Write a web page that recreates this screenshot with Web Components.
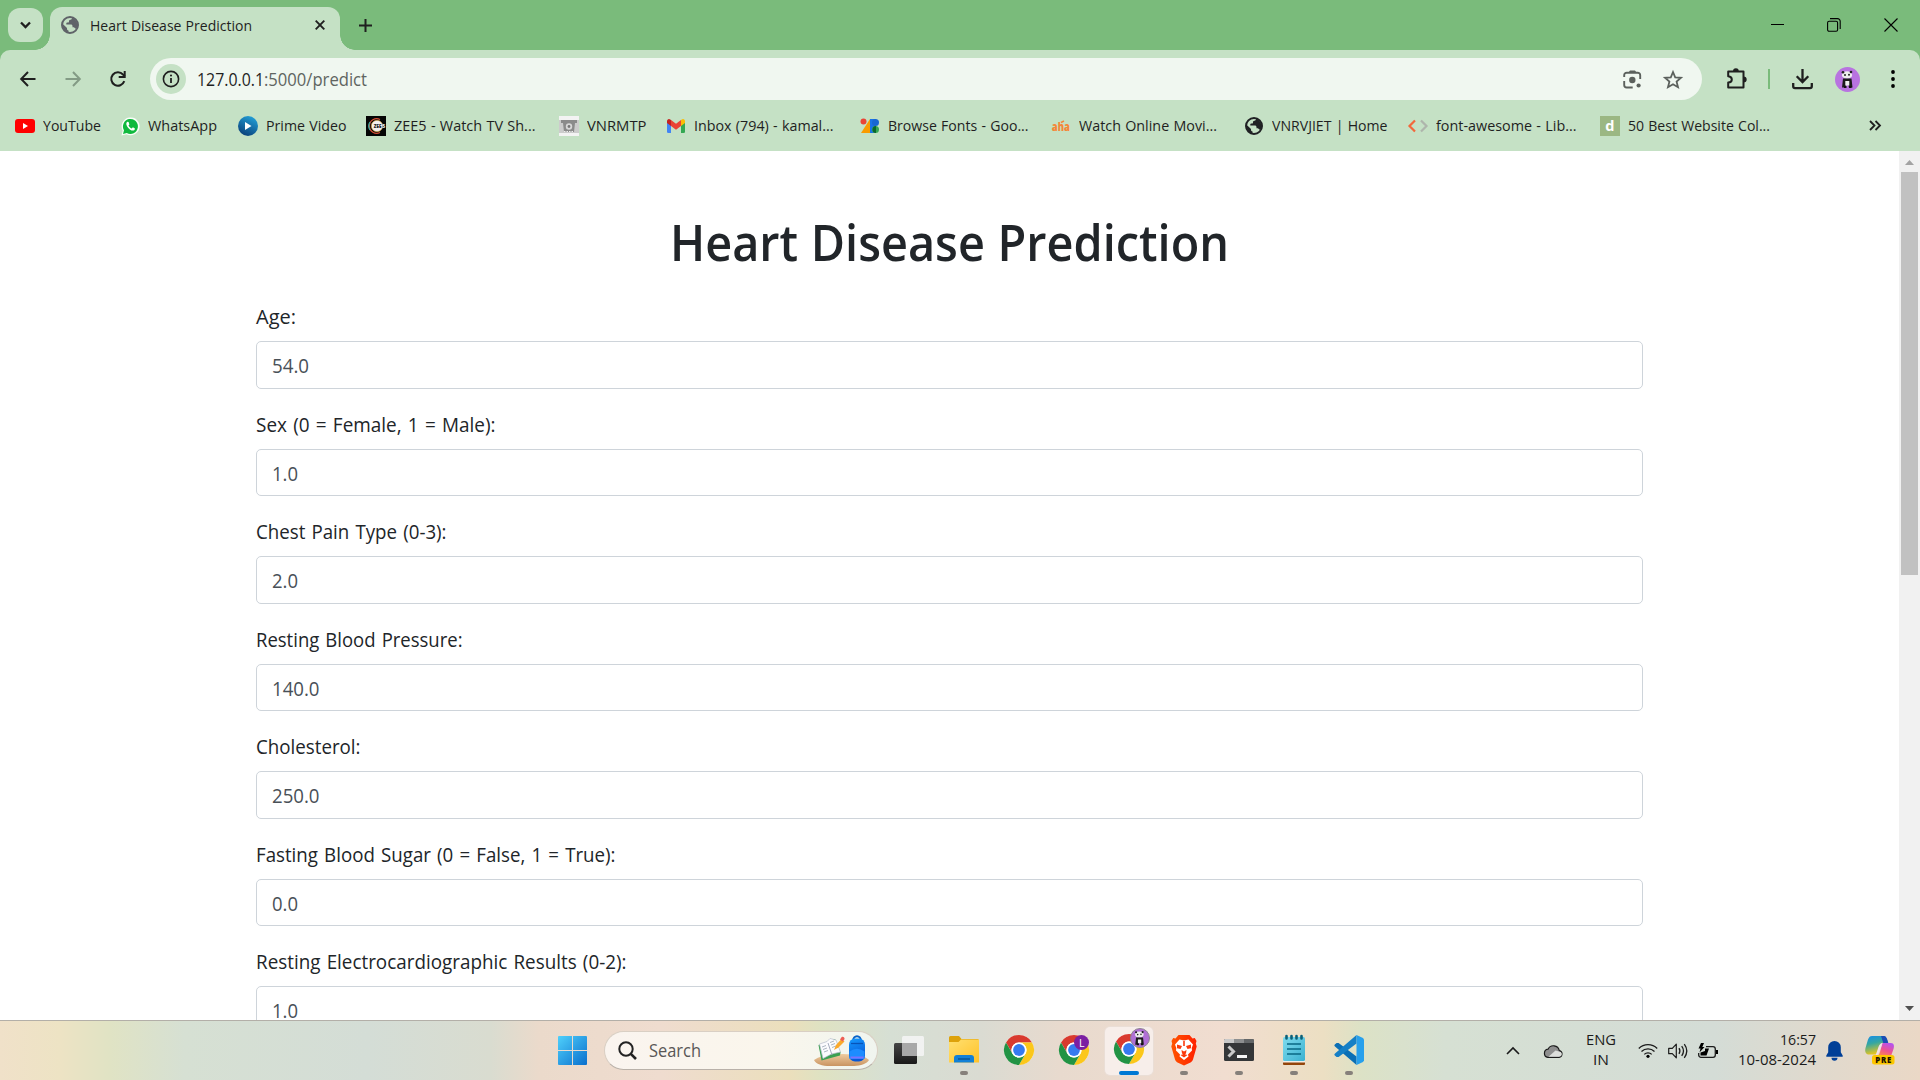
<!DOCTYPE html>
<html lang="en">
<head>
<meta charset="utf-8">
<title>Heart Disease Prediction</title>
<style>
html,body{margin:0;height:100%;overflow:hidden;background:#fff}
body{font-family:"Open Sans","Noto Sans",sans-serif;color:#1f1f1f}
</style>
</head>
<body>
<desktop-screen></desktop-screen>
<script>
const chrome = `<circle cx="15" cy="15" r="15" fill="#fff"/>
<path d="M2 7.5A15 15 0 0 1 28 7.5H15A7.5 7.5 0 0 0 8.5 18.7Z" fill="#d93a2f"/>
<path d="M28 7.5A15 15 0 0 1 15 30L21.5 18.7A7.5 7.5 0 0 0 15 7.5Z" fill="#fbc71b"/>
<path d="M15 30A15 15 0 0 1 2 7.5L8.5 18.7A7.5 7.5 0 0 0 21.5 18.7Z" fill="#229344"/>
<circle cx="15" cy="15" r="7.6" fill="#fff"/><circle cx="15" cy="15" r="5.9" fill="#367af0"/>`;
const globe = c => `<circle cx="9" cy="9" r="8" fill="none" stroke="${c}" stroke-width="2"/>
<path d="M11.2 1.6C11 3 10.7 3.6 9.4 3.8 8.3 4 8 4.6 8 5.4c0 .9-.6 1.200-1.400 1.200-.8 0-1.300.3-1.300 1.100v.8h4.300c1.300 0 1.900.6 1.900 1.700v1.100h.7c1.100 0 1.700.5 2 1.500L15.900 12A8 8 0 0 0 11.200 1.600ZM1.300 7.600 6 12.100v.7c0 1 .6 1.500 1.500 1.700v2.200A8 8 0 0 1 1.300 7.600Z" fill="${c}"/>`;
const panda = `<ellipse cx="12" cy="8" rx="5.200" ry="3.700" fill="#eee"/><circle cx="8" cy="5.200" r="1.300" fill="#222"/><circle cx="16" cy="5" r="1.300" fill="#222"/><circle cx="10" cy="8" r="1" fill="#222"/><circle cx="14" cy="7.700" r="1" fill="#222"/><path d="M8 11.500h8.500l1 9h-3.700l-.5-4.500h-2l-.6 4.500H7Z" fill="#1b1b1b"/><path d="M10.300 14h4v4.500h-4z" fill="#eee"/><path d="M9 20h2.500M14 20h2.500" stroke="#111" stroke-width="2"/>`;
const ICONS = {
 chevron:[35,34,`<path d="m13 14.500 4.500 4.500 4.500-4.500" fill="none" stroke="#1f1f1f" stroke-width="2.300"/>`],
 globeGrey:[18,18,globe('#5f6368')],
 globeDark:[18,18,globe('#202124')],
 close:[10,10,`<path d="m.7.7 8.600 8.600M9.300.7.7 9.300" stroke="#1f1f1f" stroke-width="1.900"/>`],
 plus:[13,13,`<path d="M6.500 0v13M0 6.500h13" stroke="#1f1f1f" stroke-width="2"/>`],
 min:[13,13,`<path d="M0 6.500h13" stroke="#000"/>`],
 restore:[14,14,`<rect x=".6" y="3.200" width="10" height="10" rx="1.500" fill="none" stroke="#000" stroke-width="1.100"/><path d="M3 .6h7.500a2.700 2.700 0 0 1 2.700 2.700V11" fill="none" stroke="#000" stroke-width="1.100"/>`],
 winclose:[14,14,`<path d="m.5.5 13 13M13.500.5l-13 13" stroke="#000" stroke-width="1.100"/>`],
 back:[16,16,`<path d="M15.500 8H1.500M8 1 1.200 8 8 15" fill="none" stroke="#1f1f1f" stroke-width="2"/>`],
 fwd:[16,16,`<path d="M.5 8h14M8 1l6.800 7L8 15" fill="none" stroke="#839b85" stroke-width="2"/>`],
 reload:[16,16,`<path d="M14.300 10.200A6.700 6.700 0 1 1 13 3.500L14.800 5.300" fill="none" stroke="#1f1f1f" stroke-width="2"/><path d="M15.700 0v7H8.700V5h5V0Z" fill="#1f1f1f"/>`],
 info:[30,30,`<circle cx="15" cy="15" r="15" fill="#c5e1c5"/><circle cx="15" cy="15" r="7.600" fill="none" stroke="#1f1f1f" stroke-width="1.600"/><path d="M15 14v5" stroke="#1f1f1f" stroke-width="1.800"/><circle cx="15" cy="11.500" r="1.050" fill="#1f1f1f"/>`],
 lens:[19,19,`<path d="M1.200 7V5.200A2.500 2.500 0 0 1 3.700 2.700h11A2.500 2.500 0 0 1 17.200 5.200V9M1.200 11v4A2.500 2.500 0 0 0 3.700 17.500h6" fill="none" stroke="#5b605c" stroke-width="1.900"/><path d="M5.500 2.500 7 .5h5l1.500 2Z" fill="#5b605c"/><circle cx="9.300" cy="10" r="3.200" fill="#5b605c"/><circle cx="15.600" cy="15.500" r="2.100" fill="#5b605c"/>`],
 star:[20,19,`<path d="M10 2 12.200 7.300 18 7.800 13.600 11.600 15 17.200 10 14.200 5 17.200 6.400 11.600 2 7.800 7.800 7.300Z" fill="none" stroke="#5b605c" stroke-width="1.800"/>`],
 puzzle:[21,21,`<path d="M2.200 3.500H17.500V19.400H2.200V14.600C7 14.200 7 8.700 2.200 8.300Z" fill="none" stroke="#1f1f1f" stroke-width="2" stroke-linejoin="round"/><path d="M7 3.500a2.900 3.300 0 0 1 5.800 0ZM17.500 8.500a3.200 2.900 0 0 1 0 5.800Z" fill="#1f1f1f"/>`],
 download:[21,21,`<path d="M10.500 0v12M4.700 7.200l5.800 5.800 5.800-5.800M1.200 14v3.300a1.800 1.800 0 0 0 1.800 1.800H18a1.800 1.800 0 0 0 1.800-1.800V14" fill="none" stroke="#1f1f1f" stroke-width="2.300"/>`],
 avatar:[25,25,`<circle cx="12.500" cy="12.500" r="12.500" fill="#b873e0"/>${panda}`],
 dots:[4,18,`<circle cx="2" cy="2" r="1.900"/><circle cx="2" cy="9" r="1.900"/><circle cx="2" cy="16" r="1.900"/>`],
 more:[12,11,`<path d="m1 1 4.500 4.500L1 10M6.500 1 11 5.500 6.500 10" fill="none" stroke="#1f1f1f" stroke-width="1.800"/>`],
 youtube:[20,20,`<rect y="3" width="20" height="14" rx="3" fill="#f00"/><path d="m8 7 5 3-5 3Z" fill="#fff"/>`],
 whatsapp:[20,20,`<path d="M1.500 19.500 2.700 14.600A9 8.900 0 1 1 6.400 18.200Z" fill="#f8fff8"/><path d="m3 18 1-3.700a7.500 7.500 0 1 1 2.800 2.700Z" fill="#10b93e"/><path d="M7.300 5.700c-1.500 1-1.300 3 .2 5.200 1.900 2.700 4.300 4.100 6 3.600 1-.3 1.400-1 1.400-2l-2-1.200-1.200 1.200c-1.500-.6-2.500-1.600-3.200-3l.9-1.100-.8-2.400Z" fill="#fff"/>`],
 prime:[20,20,`<defs><linearGradient id="p" x1=".8" y1="0" x2=".3" y2="1"><stop stop-color="#23a3da"/><stop offset="1" stop-color="#0a3f79"/></linearGradient></defs><circle cx="10" cy="10" r="10" fill="url(#p)"/><path d="m7 6 6.500 4L7 14Z" fill="#fff"/>`],
 zee:[20,20,`<rect width="20" height="20" fill="#050505"/><path d="M14 3.500a7.300 7.300 0 1 0 0 13" fill="none" stroke="#d44e35" stroke-width="1.300"/><path d="M4 6a7.300 7.300 0 0 0 0 8" fill="none" stroke="#3aa7a0" stroke-width="1.300"/><circle cx="11" cy="10" r="5.700" fill="#f5f0f0" stroke="#dca538" stroke-width=".6"/><text x="7.800" y="11.600" font-size="4.500" font-weight="800" font-family="Open Sans" fill="#222">ZEE</text><text x="16.600" y="11.600" font-size="4.500" font-weight="800" font-family="Open Sans" fill="#eee">5</text>`],
 vnr:[20,20,`<rect width="20" height="20" fill="#f3f3f3"/><rect y="4" width="20" height="13" fill="#ccc"/><path d="M2 4h16v3H2ZM4 7h12l-1 9H5Z" fill="#8b8b8b"/><circle cx="10" cy="10.500" r="3.200" fill="#d8d8d8"/><circle cx="10" cy="10.500" r="1.400" fill="#777"/><path d="M5 15.500h10" stroke="#eee" stroke-dasharray="1.500 1"/>`],
 gmail:[18,14,`<path d="M0 3v9.700A1.300 1.300 0 0 0 1.300 14H4V6Z" fill="#4285f4"/><path d="M18 3v9.700a1.300 1.300 0 0 1-1.300 1.300H14V6Z" fill="#34a853"/><path d="M4 7 0 4V2A2 2 0 0 1 3.200.5L4 1Z" fill="#c5221f"/><path d="M14 7l4-3V2A2 2 0 0 0 14.800.5L14 1Z" fill="#fbbc04"/><path d="m4 1 5 3.800L14 1v6l-5 3.800L4 7Z" fill="#ea4335"/>`],
 fonts:[20,16,`<path d="M10 1v14H1Z" fill="#f99b00"/><circle cx="3.500" cy="3.500" r="3" fill="#ea4335"/><path d="M10 1h6v14h-6Z" fill="#1a73e8"/><circle cx="15.500" cy="4.500" r="3.500" fill="#1967d2"/><circle cx="15.500" cy="11.500" r="3.500" fill="#34a853"/><path d="M16 8v7a3.500 3.500 0 0 1 0-7Z" fill="#0d652d"/>`],
 aha:[20,20,`<text x=".8" y="14.500" font-family="Open Sans" font-weight="800" font-size="12.500" textLength="18" lengthAdjust="spacingAndGlyphs" fill="#f58738">aha</text><path d="M10 6.500 13 5" stroke="#f58738" stroke-width="1.500"/>`],
 code:[20,14,`<path d="M7 1.500 1.500 7 7 12.500" fill="none" stroke="#f2683c" stroke-width="2.200"/><path d="M13 1.500 18.500 7 13 12.500" fill="none" stroke="#aeb5ac" stroke-width="2.200"/>`],
 dd:[20,20,`<rect width="20" height="20" fill="#9bb783"/><text x="5.200" y="15.300" font-family="Open Sans" font-weight="700" font-size="14.500" fill="#fff">d</text>`],
 win:[29,29,`<defs><linearGradient id="w" x1="0" y1="0" x2="1" y2="1"><stop stop-color="#4fd0fb"/><stop offset="1" stop-color="#0a6fcd"/></linearGradient></defs><path d="M1 0h13v14H0V1A1 1 0 0 1 1 0ZM15 0h13a1 1 0 0 1 1 1v13H15ZM0 15h14v14H1a1 1 0 0 1-1-1ZM15 15h14v13a1 1 0 0 1-1 1H15Z" fill="url(#w)"/>`],
 search:[19,19,`<circle cx="8" cy="8" r="6.700" fill="none" stroke="#222" stroke-width="2"/><path d="m12.800 12.800 5.200 5.200" stroke="#222" stroke-width="2.600"/>`],
 school:[57,32,`<defs><linearGradient id="tb" x2="0" y2="1"><stop stop-color="#efcca0"/><stop offset="1" stop-color="#c99462"/></linearGradient><linearGradient id="bg" x2=".3" y2="1"><stop stop-color="#169bff"/><stop offset="1" stop-color="#0757d6"/></linearGradient></defs><path d="M1 25C5 22 14 19 30 19s23 3 26 6c-1 3-9 6-15 6H17C9 31 3 29 1 25Z" fill="url(#tb)"/><path d="m5.500 10 3 15.500L27 20.500l.5-3L22 4Z" fill="#3ba052"/><path d="m6.500 9 7.500-2.500 3-3 6 1.500 4.500 12-9 2-8.500 4.500Z" fill="#fbfbfd" stroke="#b9bdcd" stroke-width=".7"/><path d="m15 8 4 12" stroke="#a6adbf"/><path d="m9 12 4-1.500m-3 4 4-1.500m-3 4 4-1.500m2-8 4-1.500m-3 4 4-1.500m-3 4 4-1.500" stroke="#8a96a8" stroke-width=".7"/><path d="m21 15 2-5 5.500-6 3 2.500-6 6Z" fill="#fba92c"/><path d="m27 4.500 1.500-2.300c1.500-1.500 4 .8 2.700 2.500L29.700 6.500Z" fill="#ee5e55"/><path d="M40 6c0-6.500 8-6.500 8 0" fill="none" stroke="#0862c9" stroke-width="2"/><rect x="36" y="3.500" width="16" height="23" rx="6" fill="url(#bg)"/><path d="M36.500 16.500Q44 11 51.500 16.500V24H36.500Z" fill="#1d8cff"/><path d="M37.500 22.500h13" stroke="#7a72ff" stroke-width="2"/><path d="M38 8.500h12" stroke="#0754b8" stroke-width="1.300"/>`],
 tasks:[30,28,`<defs><linearGradient id="t" x2="0" y2="1"><stop stop-color="#454545"/><stop offset="1" stop-color="#191919"/></linearGradient></defs><rect y="7" width="23" height="21" rx="1.500" fill="url(#t)"/><rect x="8" y="0" width="22" height="20" rx="1.500" fill="#f5f5f5" opacity=".88"/><path d="M8 7h15v13H8Z" fill="#a8a8a8"/>`],
 folder:[30,27,`<defs><linearGradient id="f" x2="1" y2="1"><stop stop-color="#ffe071"/><stop offset="1" stop-color="#ffc229"/></linearGradient></defs><path d="M0 1.500A1.500 1.500 0 0 1 1.500 0H10l2.500 3H28.500A1.500 1.500 0 0 1 30 4.500V10H0Z" fill="#dda20b"/><path d="M0 6h9.500L12 3.500H30V26.500H0Z" fill="url(#f)"/><path d="M5 26.500V22a3 3 0 0 1 3-3h14a3 3 0 0 1 3 3v4.500Z" fill="#1280d7"/><path d="M9 23h12" stroke="#075699" stroke-width="1.500"/>`],
 chrome:[30,30,chrome],
 chromeL:[30,30,chrome+`<circle cx="22.500" cy="7.500" r="7.500" fill="#7b1fa2"/><text x="20" y="11.500" font-size="10.500" font-family="Open Sans" fill="#fff">L</text>`],
 chromeP:[36,36,`<g transform="translate(0 6)">${chrome}</g><circle cx="26" cy="10" r="9.500" fill="#b06fd5" stroke="#8d8491" stroke-width="1"/><g transform="translate(15.500 0) scale(.82)">${panda}</g>`],
 brave:[26,30,`<defs><linearGradient id="b" x2="1"><stop stop-color="#f50"/><stop offset="1" stop-color="#ff2000"/></linearGradient></defs><path d="M7.500 0h11l3 3.400 2.300-.4 1.700 3-.7 2.500.9 3L22 24.500c-.5 1.500-1.500 2.300-2.500 3L13 30.500l-6.500-3c-1-.7-2-1.500-2.500-3L.3 11.500l.9-3L.5 6l1.700-3 2.300.4Z" fill="url(#b)"/><path d="m8.500 4.500 4.500 1 4.500-1 4.500 5-1.300 3.500.3 2.500-4 4 .5 2-4.500 3.500L8.500 21.500l.5-2-4-4 .3-2.500L4 9.500Z" fill="#fff"/><path d="M6 9.500 11 11l-1.500 3-3.500-.7ZM20 9.500 15 11l1.500 3 3.500-.7ZM10.500 15l2.500 1.500 2.500-1.500-.5 3.500-2 1.200-2-1.200ZM9.500 20l3.500-1 3.500 1-3.500 2.500ZM12.200 6h1.600v5h-1.600Z" fill="#fb3a0c"/>`],
 term:[30,22,`<rect width="30" height="22" rx="1.500" fill="#343638"/><path d="M1 0h9v4H0V1Z" fill="#c9c9c9"/><path d="M10 0h10v4H10Z" fill="#8d8f90"/><path d="M20 0h9l1 1v3H20Z" fill="#636668"/><path d="m4.500 7.500 5 5-5 5" fill="none" stroke="#c9c9c9" stroke-width="3"/><path d="M13 17.500h10" stroke="#f5f5f5" stroke-width="3"/>`],
 note:[22,30,`<defs><linearGradient id="n" x2="1" y2="1"><stop stop-color="#7fdcee"/><stop offset="1" stop-color="#3bb1d1"/></linearGradient></defs><path d="M0 26h22v3a1 1 0 0 1-1 1H1a1 1 0 0 1-1-1Z" fill="#93450b"/><path d="M0 25h22v2.500H0Z" fill="#f3eee8"/><rect y="2" width="22" height="24" rx="1.500" fill="url(#n)"/><path d="M4 9h14M4 14h14M4 19h14" stroke="#086884" stroke-width="1.700"/><path d="M3.500 1v2.500M8.500 1v2.500M13.500 1v2.500M18.500 1v2.500" stroke="#0b6079" stroke-width="2.600" stroke-linecap="round"/>`],
 vscode:[30,30,`<path d="M.8 9.500 2.600 8l2 .1L22.500 21.500V29.900L1 11.500a1.300 1.300 0 0 1-.2-2Z" fill="#0b6fb5"/><path d="M.8 20.500l1.800 1.500 2-.1L22.500 8.500V.1L1 18.500a1.300 1.300 0 0 0-.2 2Z" fill="#157fc6"/><path d="m22.500 0 6.500 3 1 1.500v21L29 27l-6.500 3Z" fill="#27a0ec"/>`],
 caret:[14,8,`<path d="m1 7 6-6 6 6" fill="none" stroke="#1b1b1b" stroke-width="1.600"/>`],
 cloud:[20,14,`<path d="M4.800 13.300H16a3.400 3.400 0 0 0 .3-6.700A6 6 0 0 0 5 5.200a4.100 4.100 0 0 0-.2 8.100Z" fill="#8e8e8e" stroke="#1a1a1a" stroke-width="1.200"/><path d="m5.500 12.700 7-6.200 5.300 1.500c2 2 .8 4.700-1.800 4.700Z" fill="#dcdedb"/>`],
 wifi:[20,15,`<path d="M.8 5.500a13 13 0 0 1 18.400 0M3.500 8.500a9.300 9.300 0 0 1 13 0M6.300 11.400a5.300 5.300 0 0 1 7.400 0" fill="none" stroke="#1b1b1b" stroke-width="1.300"/><circle cx="10" cy="13.300" r="1.600"/>`],
 vol:[20,16,`<path d="M.7 5.300h3.600L8.300 1.200v13.600L4.300 10.700H.7Z" fill="none" stroke="#1b1b1b" stroke-width="1.200" stroke-linejoin="round"/><path d="M11 5.200q1.800 2.800 0 5.600M13.700 3.200q3.600 4.800 0 9.600M16.300 1.200q5 6.800 0 13.600" fill="none" stroke="#1b1b1b" stroke-width="1.300"/>`],
 batt:[20,16,`<path d="M8 3.700h7a2.300 2.300 0 0 1 2.300 2.300v6a2.300 2.300 0 0 1-2.300 2.300H3A2.300 2.300 0 0 1 .7 12v-2" fill="none" stroke="#1b1b1b" stroke-width="1.300"/><path d="M18 7h2v4h-2ZM2.500 12.500V9.500L7 8V5.500h4L8.500 12.500Z"/><path d="M3 0 .5 5.500h2L1.500 9.500 6.500 4H4.300L6 0Z"/>`],
 bell:[17,19,`<path d="M8.500 0a6.300 6.300 0 0 1 6.300 6.300v5l1.900 3.200v1.200H.3v-1.200l1.900-3.200v-5A6.300 6.300 0 0 1 8.500 0ZM5.500 16.700h6a3 3 0 0 1-6 0Z" fill="#003f97"/>`],
 copilot:[30,29,`<defs><linearGradient id="c1" x2=".3" y2="1"><stop stop-color="#168de9"/><stop offset=".45" stop-color="#35a7a1"/><stop offset="1" stop-color="#eac51c"/></linearGradient><linearGradient id="c2" x1=".7" y1="0" x2=".2" y2="1"><stop stop-color="#b553ef"/><stop offset=".5" stop-color="#ec5294"/><stop offset="1" stop-color="#fb8d48"/></linearGradient></defs><path d="M7 0h11c2.500 0 3.500 2 4.500 5l.7 2H18c-2 0-3 1-4 4l-2.500 7.500H4C1 18.500-.5 16 .5 12L3 3.500C4 1 5 0 7 0Z" fill="url(#c1)"/><path d="M16 0h3c2 0 3 2 3.700 5l.6 2h-5Z" fill="#1b4db5"/><path d="M17.500 7H26c3 0 3.500 3 2.500 6l-2.500 7H11c2 0 3-1 4-4Z" fill="url(#c2)"/><path d="m17.500 7-3 8c-1 3-2 4-4 4.500l2.500-7C14 9 15 7.500 17.500 7Z" fill="#f3dfe7"/><rect x="7" y="19" width="22.500" height="9.500" rx="2.500" fill="#fcc600"/><text x="10.300" y="26.700" font-family="Open Sans" font-weight="800" font-size="7.800" textLength="16" fill="#1b1400">PRE</text>`],
 up:[9,5,`<path d="M4.500 0 9 5H0Z" fill="#a3a3a3"/>`],
 down:[9,5,`<path d="M4.500 5 9 0H0Z" fill="#505050"/>`]
};

const define = (name, html, after) => customElements.define(name, class extends HTMLElement {
  constructor(){ super(); this.attachShadow({mode:'open'}); }
  connectedCallback(){
    this.shadowRoot.innerHTML = typeof html === 'function' ? html(this) : html;
    if (after) after(this);
  }
});

define('ui-icon', el => {
  const [w,h,g] = ICONS[el.getAttribute('name')];
  return `<style>:host{display:block;flex:none;width:${w}px;height:${h}px}svg{display:block;overflow:visible}</style><svg width="${w}" height="${h}" viewBox="0 0 ${w} ${h}">${g}</svg>`;
});

/* A single line of text condensed or widened to the width given in its "w" attribute. */
define('fit-text', `<style>:host{display:block;flex:none;white-space:pre;word-spacing:var(--words,.04em)}span{display:inline-block;transform-origin:0 50%}</style><span><slot></slot></span>`, el => {
  const w = +el.getAttribute('w'), span = el.shadowRoot.querySelector('span');
  el.style.width = w + 'px';
  span.style.transform = `scaleX(${(w / span.getBoundingClientRect().width).toFixed(4)})`;
});

define('book-mark', el => `<style>:host{display:flex;align-items:center;flex:none;box-sizing:border-box;width:${el.getAttribute('span')}px}
.i{width:20px;display:flex;justify-content:center;margin-right:7.500px;flex:none}fit-text{font-size:15px;line-height:20px;margin-bottom:2px}</style>
<div class="i"><ui-icon name="${el.getAttribute('icon')}"></ui-icon></div><fit-text w="${el.getAttribute('w')}">${el.getAttribute('text')}</fit-text>`);

define('tab-strip', `<style>
:host{display:flex;align-items:flex-start;height:50px;background:#7abb7b;flex:none}
.menu{margin:8px 0 0 8px;border-radius:12px;background:#c5e1c5}
.tab{position:relative;display:flex;align-items:center;box-sizing:border-box;width:290px;height:43px;margin:7px 0 0 7px;padding:0 15px 7px 11px;border-radius:12px 12px 0 0;background:#c5e1c5}
.tab::before,.tab::after{content:"";position:absolute;bottom:0;width:15px;height:15px}
.tab::before{left:-15px;background:radial-gradient(circle at 0 0,transparent 14.500px,#c5e1c5 15px)}
.tab::after{right:-15px;background:radial-gradient(circle at 100% 0,transparent 14.500px,#c5e1c5 15px)}
fit-text{font-size:15px;line-height:20px;margin:0 auto 0 11px}
.plus{margin:19px 0 0 19px}
.win{display:flex;gap:43px;margin:18px 22px 0 auto}
</style>
<ui-icon class="menu" name="chevron"></ui-icon>
<div class="tab"><ui-icon name="globeGrey"></ui-icon><fit-text w="162">Heart Disease Prediction</fit-text><ui-icon name="close"></ui-icon></div>
<ui-icon class="plus" name="plus"></ui-icon>
<div class="win"><ui-icon name="min"></ui-icon><ui-icon name="restore"></ui-icon><ui-icon name="winclose"></ui-icon></div>`);

define('tool-bar', `<style>
:host{display:block;flex:none;height:101px;background:#7abb7b}
.panel{background:#c5e1c5;border-radius:10px 10px 0 0;height:101px}
.row{display:flex;align-items:center;height:42px;padding:8px 0 0 20px}
.row>*{flex:none}
.nav{display:flex;gap:29px}
.addr{display:flex;align-items:center;box-sizing:border-box;width:1552px;height:42px;margin-left:24px;padding:0 19px 0 6px;border-radius:21px;background:#f0f7f0}
.url{display:flex;margin:0 auto 0 11px;font-size:17.500px;line-height:24px}
.path{color:#5f6561}
.lens{margin-right:21px}
.puzzle{margin:-2px 0 0 23.500px}.div{width:2px;height:20px;background:#7abb7b;margin:0 22.500px 0 21px}
.av{margin:0 31px 0 21.500px}
.books{display:flex;align-items:center;height:51px;padding-left:15px}
</style>
<div class="panel"><div class="row">
<div class="nav"><ui-icon name="back"></ui-icon><ui-icon name="fwd"></ui-icon><ui-icon name="reload"></ui-icon></div>
<div class="addr"><ui-icon name="info"></ui-icon><div class="url"><fit-text w="67">127.0.0.1</fit-text><fit-text class="path" w="103">:5000/predict</fit-text></div><ui-icon class="lens" name="lens"></ui-icon><ui-icon name="star"></ui-icon></div>
<ui-icon class="puzzle" name="puzzle"></ui-icon><div class="div"></div><ui-icon name="download"></ui-icon><ui-icon class="av" name="avatar"></ui-icon><ui-icon name="dots"></ui-icon>
</div>
<div class="books">
<book-mark icon="youtube" text="YouTube" w="58" span="105"></book-mark>
<book-mark icon="whatsapp" text="WhatsApp" w="69" span="118"></book-mark>
<book-mark icon="prime" text="Prime Video" w="80.500" span="128"></book-mark>
<book-mark icon="zee" text="ZEE5 - Watch TV Sh..." w="141.500" span="193"></book-mark>
<book-mark icon="vnr" text="VNRMTP" w="59.500" span="107"></book-mark>
<book-mark icon="gmail" text="Inbox (794) - kamal..." w="139.500" span="194"></book-mark>
<book-mark icon="fonts" text="Browse Fonts - Goo..." w="140.500" span="191"></book-mark>
<book-mark icon="aha" text="Watch Online Movi..." w="138" span="193"></book-mark>
<book-mark icon="globeDark" text="VNRVJIET | Home" w="115.500" span="164"></book-mark>
<book-mark icon="code" text="font-awesome - Lib..." w="140.500" span="192"></book-mark>
<book-mark icon="dd" text="50 Best Website Col..." w="142" span="269"></book-mark>
<ui-icon name="more"></ui-icon>
</div></div>`);

define('form-field', el => `<style>
:host{display:block;height:107.500px;--words:.07em}
.label{font-size:20px;line-height:30px;height:29px;padding-top:1px;margin-bottom:10px;color:#212529}
.box{display:flex;align-items:center;box-sizing:border-box;height:47.500px;padding:2px 15px 0;border:1px solid #ced4da;border-radius:5px;font-size:20px;line-height:30px;color:#495057;background:#fff}
</style><div class="label"><fit-text w="${el.getAttribute('lw')}">${el.getAttribute('label')}</fit-text></div>
<div class="box"><fit-text w="${el.getAttribute('vw')}">${el.getAttribute('value')}</fit-text></div>`);

define('web-page', `<style>
:host{display:flex;flex:1;min-height:0;overflow:hidden;background:#fff}
.body{flex:1;padding:61.250px 256px 0 256px}
h1{display:flex;justify-content:center;margin:0 0 29px;font-size:50px;line-height:60px;font-weight:600;color:#212529}
.bar{display:flex;flex-direction:column;align-items:center;box-sizing:border-box;width:21px;padding:9px 0 9px;background:#f1f1f1}
.thumb{width:17px;height:403px;margin-top:7px;background:#c1c1c1}
.down{margin-top:auto}
</style>
<div class="body"><h1><fit-text w="563" style="--words:.01em;zoom:1">Heart Disease Prediction</fit-text></h1>
<form-field label="Age:" lw="40" value="54.0" vw="37"></form-field>
<form-field label="Sex (0 = Female, 1 = Male):" lw="239.500" value="1.0" vw="26"></form-field>
<form-field label="Chest Pain Type (0-3):" lw="190.500" value="2.0" vw="26"></form-field>
<form-field label="Resting Blood Pressure:" lw="206.500" value="140.0" vw="47.500"></form-field>
<form-field label="Cholesterol:" lw="104.500" value="250.0" vw="47.500"></form-field>
<form-field label="Fasting Blood Sugar (0 = False, 1 = True):" lw="359.500" value="0.0" vw="26"></form-field>
<form-field label="Resting Electrocardiographic Results (0-2):" lw="370.500" value="1.0" vw="26"></form-field>
</div>
<div class="bar"><ui-icon name="up"></ui-icon><div class="thumb"></div><ui-icon class="down" name="down"></ui-icon></div>`, el => {
  const title = el.shadowRoot.querySelector('h1 fit-text');
  title.replaceWith(Object.assign(document.createElement('fit-text'), {textContent: title.textContent}));
  const next = el.shadowRoot.querySelector('h1 fit-text');
  next.style.setProperty('--words', '.01em');
  next.setAttribute('w', '559');
  next.remove();
  el.shadowRoot.querySelector('h1').append(next);
});

define('task-item', el => `<style>
:host{display:grid;justify-items:center;align-items:center;grid-template-rows:44px 4px;box-sizing:border-box;width:48px;height:48px;flex:none;border-radius:5px;${el.hasAttribute('active')?'background:#f7eeea;box-shadow:0 0 0 1px #eaded6':''}}
.i{display:flex;align-items:center;height:42px;${el.hasAttribute('active')?'padding:0 0 6px 6px;height:36px':'padding-top:2px'}}
.dot{height:4px;border-radius:2px;width:${el.hasAttribute('active')?20:8}px;background:${el.hasAttribute('active')?'#0078d4':el.hasAttribute('open')?'#86807b':'transparent'}}
</style><div class="i"><ui-icon name="${el.getAttribute('icon')}"></ui-icon></div><div class="dot"></div>`);

define('task-bar', `<style>
:host{display:flex;align-items:center;box-sizing:border-box;height:60px;flex:none;border-top:1px solid #b3afa8;padding-left:558px;
background:linear-gradient(90deg,#f0e1c9 0,#ede3c4 60px,#e0e3c4 110px,#d6e0d3 184px,#d4ddd6 367px,#d9dcd0 490px,#ebdacb 539px,#efdccf 661px,#ebdfbc 790px,#dfe2c2 820px,#d6dfd4 890px,#dadbd2 980px,#e8dace 1060px,#f1ddd0 1225px,#ecdfc3 1323px,#dce2c6 1362px,#d6e0d3 1445px,#d4dcd6 1715px,#e2d9cc 1837px,#ead8c6 1920px)}
.pill{display:flex;align-items:center;box-sizing:border-box;width:274px;height:39px;margin-left:17px;padding:0 7px 0 13px;border-radius:20px;border:1px solid #d9cfc4;border-bottom-color:#b9b1a9;background:linear-gradient(90deg,#faf4ef,#faf6ec 60%,#f0f5ef);color:#595756;font-size:17.500px}
.pill fit-text{margin:0 auto 0 12px;line-height:24px;padding-bottom:1px}
.apps{display:flex;gap:7px;margin-left:7px}
.tray{display:flex;align-items:center;margin:0 25px 0 auto}
.txt{font-size:15px;line-height:20px;color:#1b1b1b}
.lang{display:flex;flex-direction:column;align-items:center;margin:0 22px 3px 23px}
.clock{display:flex;flex-direction:column;align-items:flex-end;margin:0 10px 3px 20px}
</style>
<ui-icon name="win"></ui-icon>
<div class="pill"><ui-icon name="search"></ui-icon><fit-text w="52">Search</fit-text><ui-icon name="school"></ui-icon></div>
<div class="apps"><task-item icon="tasks"></task-item><task-item icon="folder" open></task-item><task-item icon="chrome"></task-item><task-item icon="chromeL"></task-item><task-item icon="chromeP" active></task-item><task-item icon="brave" open></task-item><task-item icon="term" open></task-item><task-item icon="note" open></task-item><task-item icon="vscode" open></task-item></div>
<div class="tray"><ui-icon name="caret"></ui-icon><ui-icon name="cloud" style="margin-left:23px"></ui-icon>
<div class="txt lang"><fit-text w="30">ENG</fit-text><fit-text w="16">IN</fit-text></div>
<ui-icon name="wifi"></ui-icon><ui-icon name="vol" style="margin-left:10px"></ui-icon><ui-icon name="batt" style="margin-left:10px"></ui-icon>
<div class="txt clock"><fit-text w="36">16:57</fit-text><fit-text w="78">10-08-2024</fit-text></div>
<ui-icon name="bell"></ui-icon><ui-icon name="copilot" style="margin-left:22px"></ui-icon></div>`);

define('desktop-screen', `<style>:host{display:flex;flex-direction:column;width:1920px;height:1080px;overflow:hidden}</style>
<tab-strip></tab-strip><tool-bar></tool-bar><web-page></web-page><task-bar></task-bar>`);
</script>
</body>
</html>
